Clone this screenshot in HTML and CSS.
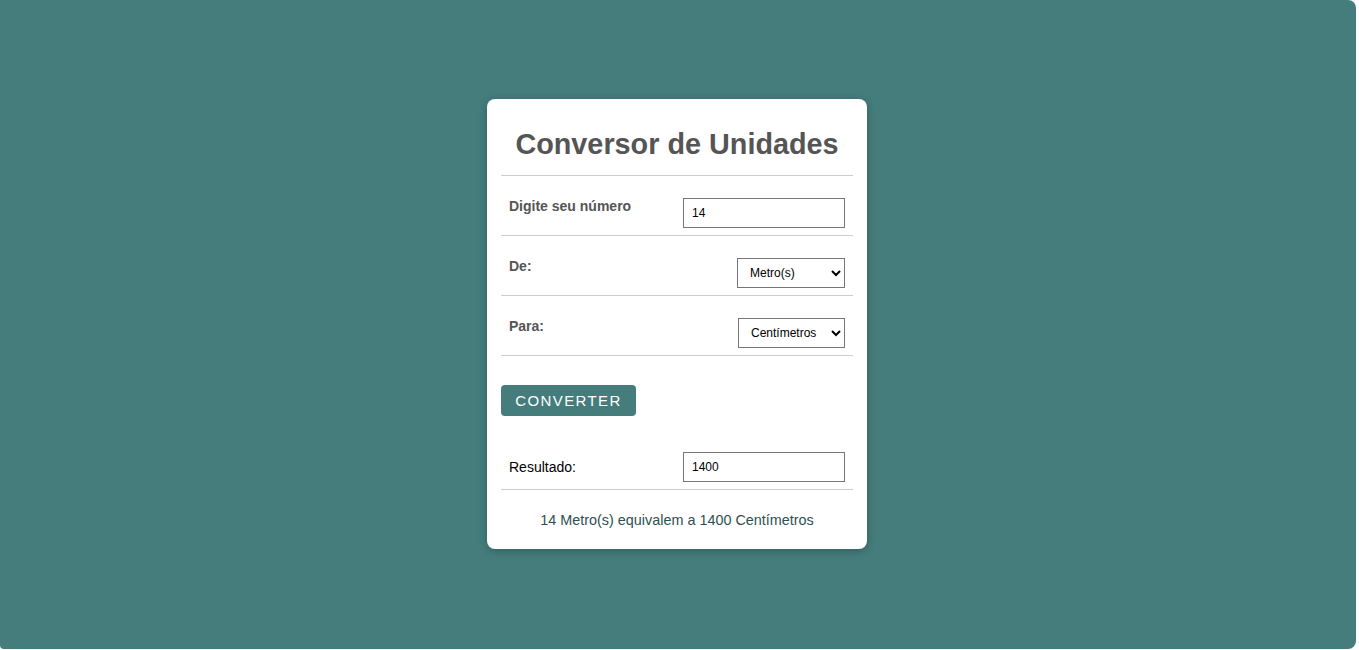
FILE: index.html
```html
<!DOCTYPE html>
<html lang="pt-BR">
<head>
<meta charset="utf-8">
<title>Conversor de Unidades</title>
<link rel="stylesheet" href="styles.css">
</head>
<body>
<div class="page">
  <div class="card">
    <h1 class="title">Conversor de Unidades</h1>
    <div class="row">
      <label class="label" for="num">Digite seu número</label>
      <input class="field" id="num" type="text" value="14">
    </div>
    <div class="row">
      <label class="label" for="de">De:</label>
      <select class="sel sel-de" id="de">
        <option>Metro(s)</option>
      </select>
    </div>
    <div class="row">
      <label class="label" for="para">Para:</label>
      <select class="sel sel-para" id="para">
        <option>Centímetros</option>
      </select>
    </div>
    <div class="actions">
      <button class="btn" type="button">CONVERTER</button>
    </div>
    <div class="row row-result">
      <label class="label-result" for="res">Resultado:</label>
      <input class="field" id="res" type="text" value="1400">
    </div>
    <p class="summary">14 Metro(s) equivalem a 1400 Centímetros</p>
  </div>
</div>
</body>
</html>
```
FILE: styles.css
```css
html, body {
  margin: 0;
  padding: 0;
  background: #ffffff;
}
body {
  font-family: "Liberation Sans", Arial, sans-serif;
}
.page {
  width: 1354px;
  height: 648px;
  padding: 0 2px 1px 0;
  background: #447d7c;
  border-radius: 0 8px 8px 4px;
  display: flex;
  align-items: center;
  justify-content: center;
}
.card {
  width: 380px;
  box-sizing: border-box;
  background: #ffffff;
  border-radius: 8px;
  padding: 0 14px;
  box-shadow: 0 2px 8px rgba(0, 0, 0, 0.25);
}
.title {
  margin: 0;
  padding: 29px 0 15px;
  font-size: 28.8px;
  line-height: 32px;
  font-weight: bold;
  color: #555555;
  text-align: center;
  border-bottom: 1px solid #cccccc;
}
.row {
  display: flex;
  justify-content: space-between;
  align-items: flex-start;
  padding: 22px 8px 7px;
  border-bottom: 1px solid #cccccc;
}
.label {
  font-size: 14px;
  line-height: 16px;
  font-weight: bold;
  color: #555555;
}
.field {
  box-sizing: border-box;
  width: 162px;
  height: 30px;
  margin: 0;
  padding: 0 8px;
  border: 1px solid #767676;
  border-radius: 0;
  font-family: "Liberation Sans", Arial, sans-serif;
  font-size: 12px;
  color: #000000;
  background: #ffffff;
}
.sel {
  box-sizing: border-box;
  height: 30px;
  margin: 0;
  padding: 0 4px 0 8px;
  border: 1px solid #767676;
  border-radius: 0;
  font-family: "Liberation Sans", Arial, sans-serif;
  font-size: 12px;
  color: #000000;
  background: #ffffff;
}
.sel-de {
  width: 108px;
}
.sel-para {
  width: 107px;
}
.actions {
  padding-top: 29px;
}
.btn {
  width: 135px;
  height: 31px;
  margin: 0;
  padding: 0;
  border: none;
  border-radius: 4px;
  background: #447d7c;
  color: #ffffff;
  font-family: "Liberation Sans", Arial, sans-serif;
  font-size: 15px;
  letter-spacing: 1.4px;
  cursor: pointer;
}
.row-result {
  align-items: center;
  padding-top: 36px;
}
.label-result {
  font-size: 14px;
  line-height: 16px;
  color: #000000;
}
.summary {
  margin: 0;
  padding: 22px 0 21px;
  font-size: 14.4px;
  line-height: 16px;
  color: #2f4f4f;
  text-align: center;
}
```
